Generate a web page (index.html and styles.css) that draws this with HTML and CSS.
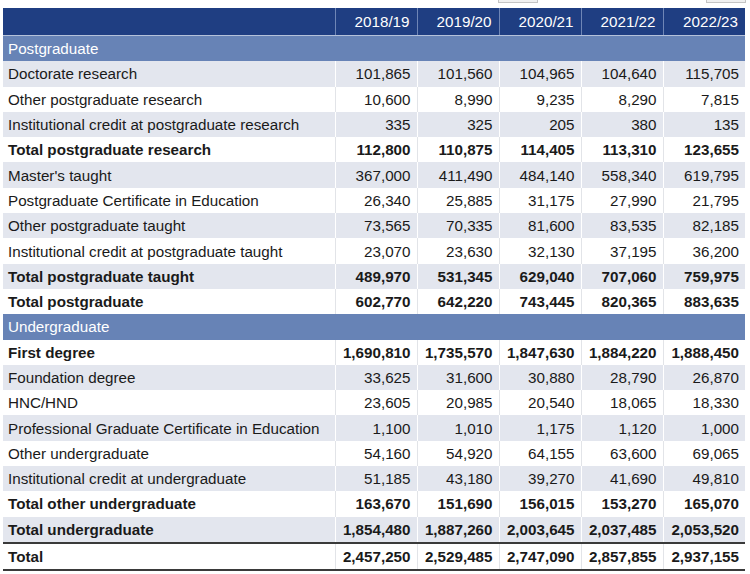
FILE: index.html
```html
<!DOCTYPE html>
<html lang="en">
<head>
<meta charset="utf-8">
<link rel="stylesheet" href="styles.css">
</head>
<body>
<div class="toolbar">
  <span class="tab tab-a"></span>
  <span class="tab tab-b"></span>
</div>
<table class="data">
  <colgroup>
    <col class="c-label"><col class="c-num"><col class="c-num"><col class="c-num"><col class="c-num"><col class="c-num">
  </colgroup>
  <thead>
    <tr><th></th><th>2018/19</th><th>2019/20</th><th>2020/21</th><th>2021/22</th><th>2022/23</th></tr>
  </thead>
  <tbody>
    <tr class="section"><td colspan="6">Postgraduate</td></tr>
    <tr><td>Doctorate research</td><td>101,865</td><td>101,560</td><td>104,965</td><td>104,640</td><td>115,705</td></tr>
    <tr><td>Other postgraduate research</td><td>10,600</td><td>8,990</td><td>9,235</td><td>8,290</td><td>7,815</td></tr>
    <tr><td>Institutional credit at postgraduate research</td><td>335</td><td>325</td><td>205</td><td>380</td><td>135</td></tr>
    <tr class="bold"><td>Total postgraduate research</td><td>112,800</td><td>110,875</td><td>114,405</td><td>113,310</td><td>123,655</td></tr>
    <tr><td>Master's taught</td><td>367,000</td><td>411,490</td><td>484,140</td><td>558,340</td><td>619,795</td></tr>
    <tr><td>Postgraduate Certificate in Education</td><td>26,340</td><td>25,885</td><td>31,175</td><td>27,990</td><td>21,795</td></tr>
    <tr><td>Other postgraduate taught</td><td>73,565</td><td>70,335</td><td>81,600</td><td>83,535</td><td>82,185</td></tr>
    <tr><td>Institutional credit at postgraduate taught</td><td>23,070</td><td>23,630</td><td>32,130</td><td>37,195</td><td>36,200</td></tr>
    <tr class="bold"><td>Total postgraduate taught</td><td>489,970</td><td>531,345</td><td>629,040</td><td>707,060</td><td>759,975</td></tr>
    <tr class="bold"><td>Total postgraduate</td><td>602,770</td><td>642,220</td><td>743,445</td><td>820,365</td><td>883,635</td></tr>
    <tr class="section"><td colspan="6">Undergraduate</td></tr>
    <tr class="bold"><td>First degree</td><td>1,690,810</td><td>1,735,570</td><td>1,847,630</td><td>1,884,220</td><td>1,888,450</td></tr>
    <tr><td>Foundation degree</td><td>33,625</td><td>31,600</td><td>30,880</td><td>28,790</td><td>26,870</td></tr>
    <tr><td>HNC/HND</td><td>23,605</td><td>20,985</td><td>20,540</td><td>18,065</td><td>18,330</td></tr>
    <tr><td>Professional Graduate Certificate in Education</td><td>1,100</td><td>1,010</td><td>1,175</td><td>1,120</td><td>1,000</td></tr>
    <tr><td>Other undergraduate</td><td>54,160</td><td>54,920</td><td>64,155</td><td>63,600</td><td>69,065</td></tr>
    <tr><td>Institutional credit at undergraduate</td><td>51,185</td><td>43,180</td><td>39,270</td><td>41,690</td><td>49,810</td></tr>
    <tr class="bold"><td>Total other undergraduate</td><td>163,670</td><td>151,690</td><td>156,015</td><td>153,270</td><td>165,070</td></tr>
    <tr class="bold"><td>Total undergraduate</td><td>1,854,480</td><td>1,887,260</td><td>2,003,645</td><td>2,037,485</td><td>2,053,520</td></tr>
    <tr class="bold total"><td>Total</td><td>2,457,250</td><td>2,529,485</td><td>2,747,090</td><td>2,857,855</td><td>2,937,155</td></tr>
  </tbody>
</table>
</body>
</html>
```
FILE: styles.css
```css
html, body {
  margin: 0;
  padding: 0;
  background: #ffffff;
}
body {
  font-family: "Liberation Sans", Arial, sans-serif;
  color: #1a1a1a;
}
.toolbar {
  display: flex;
  height: 3px;
  margin-bottom: 5px;
}
.tab {
  display: block;
  height: 2px;
  background: #f0f0f0;
  border: 1px solid #c4c4c4;
  border-top: none;
}
.tab-a {
  width: 38px;
  margin-left: 498px;
}
.tab-b {
  width: 38px;
  margin-left: 168px;
}
.data {
  margin-left: 3px;
  width: 740px;
  border-collapse: collapse;
  table-layout: fixed;
  font-size: 15.2px;
}
.c-label { width: 332px; }
.c-num { width: 82px; }
.data th {
  background: #1f3e82;
  color: #ffffff;
  font-weight: normal;
  text-align: right;
  height: 27px;
  padding: 0 7px 0 0;
  border-left: 1px solid #6f86b6;
  border-bottom: 1px solid #b4c1da;
}
.data th:first-child { border-left: none; }
.data td {
  height: 25.3px;
  padding: 0 6px 0 0;
  text-align: right;
  border-left: 1px solid #e2e4e8;
  white-space: nowrap;
}
.data td:first-child {
  text-align: left;
  padding-left: 5px;
  border-left: none;
}
.data tbody tr:nth-child(even) td {
  background: #e3e6ee;
  border-left-color: #ffffff;
}
.data tbody tr:nth-child(even) td:first-child {
  border-left: none;
}
.data tbody tr.section td {
  background: #6783b6;
  color: #ffffff;
  text-align: left;
  padding-left: 5px;
}
.data tr.bold td {
  font-weight: bold;
}
.data tr.total td {
  border-top: 2px solid #3a3a3a;
  border-bottom: 2px solid #3a3a3a;
}
```
